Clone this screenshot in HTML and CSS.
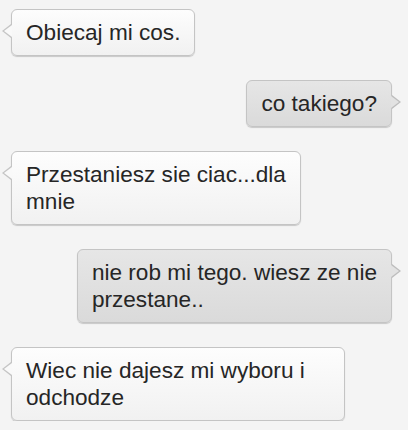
FILE: index.html
```html
<!DOCTYPE html>
<html>
<head>
    <title>Messages</title>
    <link rel="stylesheet" href="styles.css">
</head>
<body>
    <div class="chat">
        <div class="bubble in">Obiecaj mi cos.</div>
        <div class="bubble out">co takiego?</div>
        <div class="bubble in">Przestaniesz sie ciac...dla<br>mnie</div>
        <div class="bubble out">nie rob mi tego. wiesz ze nie<br>przestane..</div>
        <div class="bubble in wide">Wiec nie dajesz mi wyboru i<br>odchodze</div>
    </div>
</body>
</html>
```

FILE: styles.css
```css
body {
    margin: 0;
    background-color: #f4f4f4;
    font-family: "Liberation Sans", Arial, sans-serif;
}

.chat {
    display: flex;
    flex-direction: column;
    gap: 24px;
    padding: 9px 16px 0 11px;
}

.bubble {
    position: relative;
    padding: 9px 14px;
    font-size: 22.6px;
    line-height: 27px;
    color: #262626;
    border: 1px solid #c4c4c4;
    border-radius: 6px;
    box-shadow: 0 1px 1px rgba(0, 0, 0, 0.18);
    white-space: nowrap;
}

.bubble::before,
.bubble::after {
    content: "";
    position: absolute;
    width: 0;
    height: 0;
    border-style: solid;
    border-color: transparent;
}

.bubble.in {
    align-self: flex-start;
    background: linear-gradient(#fdfdfd, #f1f1f1);
}

.bubble.wide {
    width: 304px;
}

.bubble.in::before {
    left: -10px;
    top: 14px;
    border-width: 7px 9px 7px 0;
    border-right-color: #c4c4c4;
}

.bubble.in::after {
    left: -8px;
    top: 15px;
    border-width: 6px 8px 6px 0;
    border-right-color: #f9f9f9;
}

.bubble.out {
    align-self: flex-end;
    background: linear-gradient(#e6e6e6, #dadada);
}

.bubble.out::before {
    right: -10px;
    top: 14px;
    border-width: 7px 0 7px 9px;
    border-left-color: #bdbdbd;
}

.bubble.out::after {
    right: -8px;
    top: 15px;
    border-width: 6px 0 6px 8px;
    border-left-color: #e2e2e2;
}
```
